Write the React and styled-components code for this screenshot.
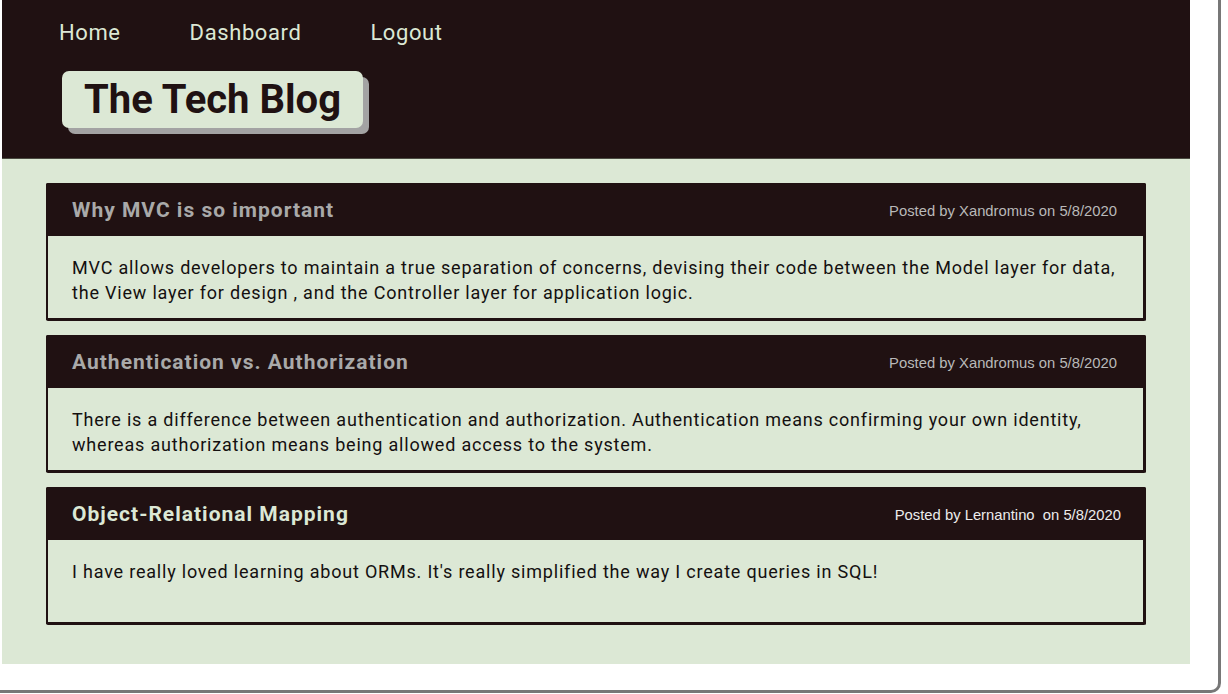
import React from 'react';
import styled, { createGlobalStyle } from 'styled-components';

const dark = '#201112';
const mint = '#dce8d5';

const posts = [
    {
        title: 'Why MVC is so important',
        author: 'Xandromus',
        date: '5/8/2020',
        body: 'MVC allows developers to maintain a true separation of concerns, devising their code between the Model layer for data, the View layer for design , and the Controller layer for application logic.',
        muted: true,
    },
    {
        title: 'Authentication vs. Authorization',
        author: 'Xandromus',
        date: '5/8/2020',
        body: 'There is a difference between authentication and authorization. Authentication means confirming your own identity, whereas authorization means being allowed access to the system.',
        muted: true,
    },
    {
        title: 'Object-Relational Mapping',
        author: 'Lernantino\u00a0',
        date: '5/8/2020',
        body: "I have really loved learning about ORMs. It's really simplified the way I create queries in SQL!",
        muted: false,
    },
];

const App = () => {
    return (
        <>
            <GlobalStyle />
            <Frame>
                <Page>
                    <Header>
                        <Nav>
                            <NavLink href="#">Home</NavLink>
                            <NavLink href="#">Dashboard</NavLink>
                            <NavLink href="#">Logout</NavLink>
                        </Nav>
                        <Logo>The Tech Blog</Logo>
                    </Header>
                    <Main>
                        {posts.map((post) => (
                            <Card key={post.title}>
                                <CardHead $muted={post.muted}>
                                    <CardTitle $muted={post.muted}>{post.title}</CardTitle>
                                    <Meta $muted={post.muted}>
                                        Posted by {post.author} on {post.date}
                                    </Meta>
                                </CardHead>
                                <CardBody>{post.body}</CardBody>
                            </Card>
                        ))}
                    </Main>
                </Page>
            </Frame>
        </>
    );
};

const GlobalStyle = createGlobalStyle`
    * { box-sizing: border-box; }
    body {
        margin: 0;
        background: #fff;
        font-family: Roboto, "Liberation Sans", sans-serif;
    }
`

const Frame = styled.div`
    width: 1221px;
    height: 693px;
    border-right: 3px solid #777;
    border-bottom: 3px solid #777;
    border-bottom-right-radius: 10px;
    padding-left: 2px;
    overflow: hidden;
`

const Page = styled.div`
    width: 1188px;
`

const Header = styled.header`
    height: 159px;
    background: ${dark};
    padding: 20px 0 0 57px;
    border-bottom: 1px solid #4a4a40;
`

const Nav = styled.nav`
    display: flex;
    gap: 69px;
`

const NavLink = styled.a`
    color: ${mint};
    text-decoration: none;
    font-size: 22px;
    line-height: 26px;
    letter-spacing: 0.6px;
`

const Logo = styled.h1`
    display: inline-block;
    margin: 25px 0 0 3px;
    padding: 0 22px;
    height: 57px;
    line-height: 58px;
    background: ${mint};
    color: ${dark};
    font-size: 40px;
    font-weight: 700;
    border-radius: 7px;
    box-shadow: 6px 6px 0 #a3a3a3;
`

const Main = styled.main`
    background: ${mint};
    padding: 24px 44px 39px;
    display: flex;
    flex-direction: column;
    gap: 14px;
`

const Card = styled.article`
    border: 2px solid ${dark};
    border-right-width: 3px;
    border-bottom-width: 3px;
    border-top: none;
    border-radius: 2px;
`

const CardHead = styled.div`
    background: ${dark};
    height: 53px;
    margin: 0 -3px 0 -2px;
    padding: 0 ${(p) => (p.$muted ? '29px' : '25px')} 0 26px;
    display: flex;
    align-items: center;
    justify-content: space-between;
    border-radius: 2px 2px 0 0;
`

const CardTitle = styled.h2`
    margin: 0;
    font-size: 21px;
    font-weight: 700;
    letter-spacing: 1px;
    color: ${(p) => (p.$muted ? '#a9a9a9' : mint)};
`

const Meta = styled.span`
    font-family: "Liberation Sans", Arial, sans-serif;
    font-size: 14.8px;
    color: ${(p) => (p.$muted ? '#b9b9b9' : '#ececec')};
    margin-top: 2px;
`

const CardBody = styled.div`
    min-height: 82px;
    padding: 19px 24px 12px;
    font-size: 18px;
    line-height: 25px;
    letter-spacing: 0.8px;
    color: #141010;
`

export default App;
